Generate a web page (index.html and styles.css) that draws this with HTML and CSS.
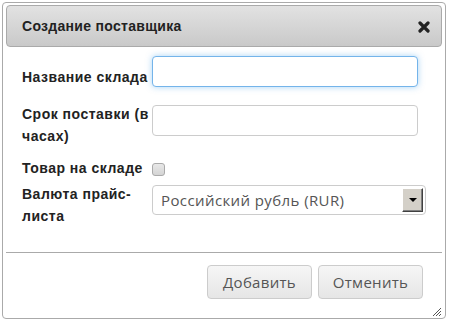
FILE: index.html
```html
<!DOCTYPE html>
<html lang="ru">
<head>
    <meta charset="UTF-8">
    <title>Создание поставщика</title>
    <link rel="stylesheet" href="styles.css">
</head>
<body>
    <div class="dialog">
        <div class="titlebar">
            <span class="title">Создание поставщика</span>
            <span class="close">
                <svg width="12" height="12" viewBox="0 0 12 12"><path d="M2 2L10 10M10 2L2 10" stroke="#222" stroke-width="3.2" stroke-linecap="round"/></svg>
            </span>
        </div>
        <div class="content">
            <div class="row first">
                <label class="label">Название склада</label>
                <input class="field focused" type="text">
            </div>
            <div class="row second">
                <label class="label">Срок поставки (в часах)</label>
                <input class="field" type="text">
            </div>
            <div class="row third">
                <label class="label">Товар на складе</label>
                <span class="checkbox"></span>
            </div>
            <div class="row fourth">
                <label class="label">Валюта прайс-листа</label>
                <div class="select">
                    <span class="select-text">Российский рубль (RUR)</span>
                    <span class="select-btn"><span class="arrow"></span></span>
                </div>
            </div>
        </div>
        <div class="footer">
            <button class="btn">Добавить</button>
            <button class="btn">Отменить</button>
        </div>
        <span class="grip">
            <svg width="12" height="12" viewBox="0 0 12 12"><path d="M11 3L3 11M11 6L6 11M11 9L9 11" stroke="#555" stroke-width="1"/></svg>
        </span>
    </div>
</body>
</html>
```

FILE: styles.css
```css
body {
    margin: 0;
    padding: 2px;
    background: #fff;
    font-family: 'Liberation Sans', Arial, sans-serif;
    color: #222;
}
.dialog {
    position: relative;
    box-sizing: border-box;
    width: 444px;
    height: 317px;
    border: 1px solid #aaa;
    border-radius: 4px;
    padding: 2px 3px 3px;
    background: #fff;
}
.titlebar {
    box-sizing: border-box;
    height: 42px;
    border: 1px solid #aaa;
    border-radius: 4px;
    background: linear-gradient(#e2e2e2, #c9c9c9);
    padding: 0 11px 0 15px;
    display: flex;
    align-items: center;
    justify-content: space-between;
}
.title {
    font-size: 14px;
    font-weight: bold;
    letter-spacing: 0.3px;
}
.close {
    display: flex;
    margin-top: 1px;
}
.content {
    padding: 9px 16px 0;
}
.row {
    display: flex;
    align-items: center;
}
.label {
    width: 130px;
    flex-shrink: 0;
    font-size: 14px;
    font-weight: bold;
    letter-spacing: 0.5px;
    line-height: 22px;
}
.second {
    margin-top: 6px;
}
.third {
    margin-top: 10px;
}
.fourth {
    margin-top: 4px;
}
.field {
    box-sizing: border-box;
    width: 266px;
    height: 31px;
    margin: 0 0 10px;
    border: 1px solid #ccc;
    border-radius: 4px;
    outline: none;
}
.field.focused {
    border-color: #74b4ea;
    box-shadow: 0 0 6px rgba(82, 168, 236, 0.5);
}
.checkbox {
    box-sizing: border-box;
    width: 13px;
    height: 13px;
    margin-top: 3px;
    border: 1px solid #aaa;
    border-radius: 3px;
    background: linear-gradient(#e8e8e8, #d4d4d4);
}
.select {
    box-sizing: border-box;
    width: 274px;
    height: 30px;
    margin-bottom: 10px;
    border: 1px solid #ccc;
    border-radius: 4px;
    display: flex;
    align-items: center;
    justify-content: space-between;
    padding: 0 2px 0 8px;
}
.select-text {
    font-family: 'Open Sans', sans-serif;
    font-size: 15px;
    letter-spacing: 0.4px;
    color: #555;
}
.select-btn {
    box-sizing: border-box;
    width: 21px;
    height: 24px;
    background: #d4d0c8;
    border: 1px solid;
    border-color: #fff #404040 #404040 #fff;
    box-shadow: inset -1px -1px 0 #808080;
    display: flex;
    align-items: center;
    justify-content: center;
}
.arrow {
    width: 0;
    height: 0;
    border-left: 4px solid transparent;
    border-right: 4px solid transparent;
    border-top: 4px solid #000;
}
.footer {
    margin-top: 25px;
    border-top: 1px solid #aaa;
    padding: 12px 19px 0;
    display: flex;
    justify-content: flex-end;
    gap: 6px;
}
.btn {
    box-sizing: border-box;
    width: 105px;
    height: 34px;
    border: 1px solid #ccc;
    border-radius: 4px;
    background: linear-gradient(#f6f6f6, #e6e6e6);
    font-family: 'Open Sans', sans-serif;
    font-size: 15px;
    letter-spacing: 0.3px;
    color: #555;
}
.grip {
    position: absolute;
    right: 3px;
    bottom: 1px;
    display: flex;
}
```
